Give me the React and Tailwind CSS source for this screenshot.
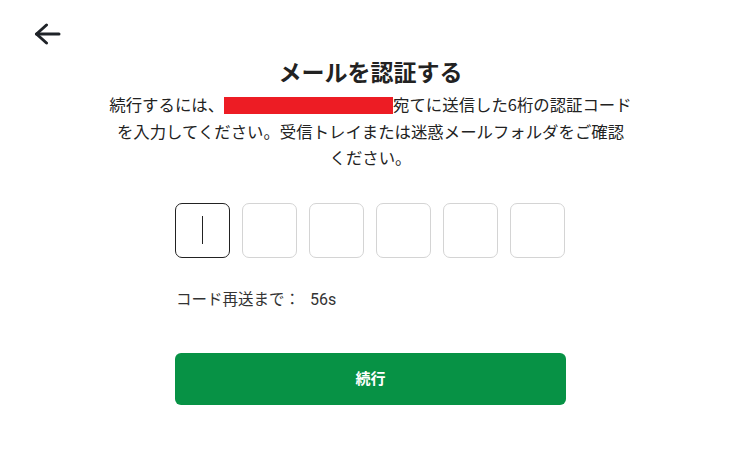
export default function App() {
  const font = { fontFamily: "'Noto Sans CJK JP', 'Noto Sans', sans-serif" };
  return (
    <div className="w-[741px] min-h-[450px] bg-white text-[#222]" style={font}>
      <div className="pl-[34px] pt-[23px]">
        <button className="block text-[#1f2328]" aria-label="back">
          <svg width="27" height="22" viewBox="0 0 27 22" fill="none" stroke="currentColor" strokeWidth="3" strokeLinecap="round" strokeLinejoin="round">
            <path d="M12.5 2 L2.5 11 L12.5 20" />
            <path d="M2.5 11 H25" />
          </svg>
        </button>
      </div>
      <div className="flex flex-col items-center">
        <h1 className="mt-[10px] text-[23px] leading-[33px] font-bold text-[#222]">メールを認証する</h1>
        <p className="mt-[3px] text-center text-[16.4px] leading-[26.5px] text-[#222]">
          続行するには、<span className="inline-block align-middle w-[169px] h-[17px] bg-[#ed1c24] -mt-[3px]"></span>宛てに送信した6桁の認証コード
          <br />
          を入力してください。受信トレイまたは迷惑メールフォルダをご確認
          <br />
          ください。
        </p>
        <div className="w-[391px] mt-[32px]">
          <div className="flex gap-[12px]">
            <div className="w-[55px] h-[55px] rounded-[7px] border border-[#222] flex items-center justify-center">
              <div className="w-px h-[28px] bg-[#222]"></div>
            </div>
            {[0, 1, 2, 3, 4].map((i) => (
              <div key={i} className="w-[55px] h-[55px] rounded-[7px] border border-[#d4d4d4]"></div>
            ))}
          </div>
          <p className="mt-[30px] pl-[1px] text-[15.5px] leading-[20px] text-[#333]">
            コード再送まで：<span className="ml-[10px] text-[16px]" style={{ fontFamily: "Roboto, 'Noto Sans', sans-serif" }}>56s</span>
          </p>
          <button className="mt-[43px] w-full h-[52px] rounded-[6px] bg-[#079245] text-white text-[15px] font-bold">続行</button>
        </div>
      </div>
    </div>
  );
}
